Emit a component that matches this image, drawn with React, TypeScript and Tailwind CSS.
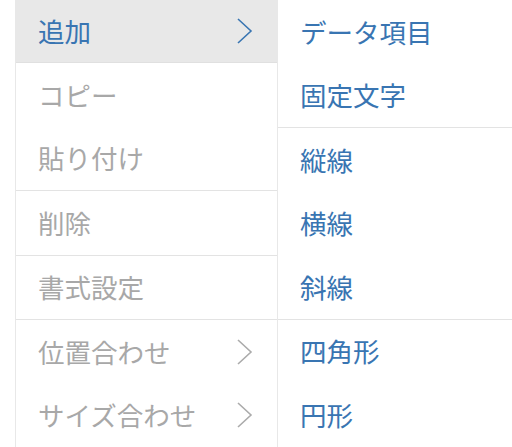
import React from "react";

type Item = { label: string; sub?: boolean; disabled?: boolean; active?: boolean; sep?: boolean };

const mainItems: Item[] = [
  { label: "追加", sub: true, active: true },
  { label: "コピー", disabled: true },
  { label: "貼り付け", disabled: true, sep: true },
  { label: "削除", disabled: true, sep: true },
  { label: "書式設定", disabled: true, sep: true },
  { label: "位置合わせ", sub: true, disabled: true },
  { label: "サイズ合わせ", sub: true, disabled: true },
];

const subItems: Item[] = [
  { label: "データ項目" },
  { label: "固定文字", sep: true },
  { label: "縦線" },
  { label: "横線" },
  { label: "斜線", sep: true },
  { label: "四角形" },
  { label: "円形" },
];

const Chevron = ({ color }: { color: string }) => (
  <svg width="18" height="26" viewBox="0 0 18 26" fill="none" className="shrink-0">
    <polyline points="2,1 15,13 2,25" stroke={color} strokeWidth="1.6" strokeLinejoin="miter" />
  </svg>
);

const Row = ({ item }: { item: Item }) => (
  <>
    <div
      className={`h-[64px] flex items-center justify-between pl-[22px] pr-[23px] text-[26.5px] leading-none ${
        item.active ? "bg-[#e8e8e8] border-b border-[#e0e0e0]" : ""
      } ${item.disabled ? "text-[#a8a8a8]" : "text-[#3975b2]"}`}
    >
      <span>{item.label}</span>
      {item.sub && <Chevron color={item.disabled ? "#ababab" : "#3975b2"} />}
    </div>
    {item.sep && <div className="h-px bg-[#e3e3e3]" />}
  </>
);

export default function App() {
  return (
    <div
      className="w-[512px] h-[447px] overflow-hidden bg-white flex"
      style={{ fontFamily: '"Noto Sans CJK JP", "Noto Sans", sans-serif' }}
    >
      <div className="w-[15px] shrink-0" />
      <div className="w-[263px] shrink-0 border-l border-r border-[#e8e8e8] flex flex-col">
        {mainItems.map((it) => (
          <Row key={it.label} item={it} />
        ))}
      </div>
      <div className="flex-1 flex flex-col">
        {subItems.map((it) => (
          <Row key={it.label} item={it} />
        ))}
      </div>
    </div>
  );
}
